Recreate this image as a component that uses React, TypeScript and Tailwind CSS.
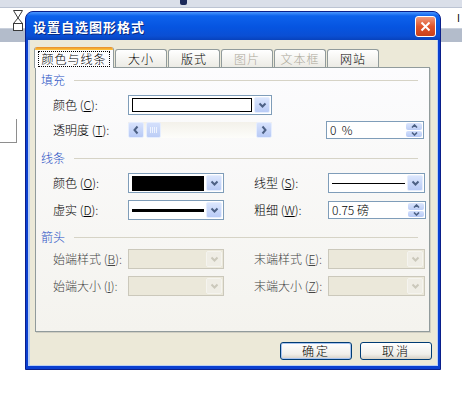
import React from 'react';

const font = "font-['Noto_Sans_CJK_SC','Noto_Sans',sans-serif]";

function Chevron({ disabled }: { disabled?: boolean }) {
  return (
    <svg width="9" height="7" viewBox="0 0 9 7">
      <path d="M1.5 1.5 L4.5 4.5 L7.5 1.5" fill="none" stroke={disabled ? '#cbc8bb' : '#4d6185'} strokeWidth="2" />
    </svg>
  );
}

function DropBtn({ disabled }: { disabled?: boolean }) {
  return (
    <div
      className={`w-[16px] shrink-0 flex items-center justify-center rounded-[2px] border ${
        disabled
          ? 'border-[#f5f4ef] bg-[#efede5]'
          : 'border-[#e6eefe] bg-[linear-gradient(to_bottom,#dbe6fd,#b9cbf6)]'
      }`}
    >
      <Chevron disabled={disabled} />
    </div>
  );
}

function Combo({ w, disabled, children }: { w: string; disabled?: boolean; children?: React.ReactNode }) {
  return (
    <div
      className={`${w} h-[20px] shrink-0 flex p-[1px] border ${
        disabled ? 'border-[#cbc8bb] bg-[#ebe8da]' : 'border-[#7f9db9] bg-white'
      }`}
    >
      <div className="flex-1 flex items-center px-[2px] min-w-0">{children}</div>
      <DropBtn disabled={disabled} />
    </div>
  );
}

function Arrow({ dir }: { dir: 'left' | 'right' }) {
  return (
    <svg width="8" height="10" viewBox="0 0 8 10">
      <path
        d={dir === 'left' ? 'M5.5 1.5 L2.5 5 L5.5 8.5' : 'M2.5 1.5 L5.5 5 L2.5 8.5'}
        fill="none"
        stroke="#4d6185"
        strokeWidth="2"
      />
    </svg>
  );
}

function ScrollBtn({ dir }: { dir: 'left' | 'right' }) {
  return (
    <div className="w-[16px] h-[16px] shrink-0 flex items-center justify-center rounded-[2px] border border-[#e6eefe] bg-[linear-gradient(to_bottom,#d7e2fc,#b8caf5)]">
      <Arrow dir={dir} />
    </div>
  );
}

function Spin({ children }: { children: React.ReactNode }) {
  return (
    <div className="w-[98px] h-[18px] shrink-0 flex p-[1px] border border-[#7f9db9] bg-white">
      <div className="flex-1 flex items-center pl-[2px] text-[12px] font-light text-black whitespace-pre">{children}</div>
      <div className="w-[16px] flex flex-col gap-[1px]">
        <div className="flex-1 flex items-center justify-center rounded-[2px] bg-[linear-gradient(to_bottom,#dbe6fd,#bccdf6)]">
          <svg width="7" height="4" viewBox="0 0 7 4">
            <path d="M1 3.5 L3.5 1 L6 3.5" fill="none" stroke="#4d6185" strokeWidth="1.6" />
          </svg>
        </div>
        <div className="flex-1 flex items-center justify-center rounded-[2px] bg-[linear-gradient(to_bottom,#d3e0fc,#b6c9f5)]">
          <svg width="7" height="4" viewBox="0 0 7 4">
            <path d="M1 0.5 L3.5 3 L6 0.5" fill="none" stroke="#4d6185" strokeWidth="1.6" />
          </svg>
        </div>
      </div>
    </div>
  );
}

function Section({ title }: { title: string }) {
  return (
    <div className="h-[14px] flex items-center pr-[6px]">
      <span className="text-[12px] font-light leading-none text-[#1f4fc4]">{title}</span>
      <div className="flex-1 ml-[9px] h-px bg-[#d6d3c6]" />
    </div>
  );
}

function Label({ w, children }: { w: string; children: React.ReactNode }) {
  return <span className={`${w} shrink-0 text-[12px] font-light leading-none text-black`}>{children}</span>;
}

const tabs = [
  { name: '大小', disabled: false },
  { name: '版式', disabled: false },
  { name: '图片', disabled: true },
  { name: '文本框', disabled: true },
  { name: '网站', disabled: false },
];

export default function App() {
  return (
    <div className={`relative w-[462px] h-[394px] bg-white overflow-hidden ${font}`}>
      {/* word window behind */}
      <div className="h-[8px] bg-[#dadfe9] border-b border-[#bcc4d3] relative">
        <div className="absolute left-[180px] top-0 w-[7px] h-[5px] bg-[#1c2a5a] rounded-b-[2px]" />
      </div>
      <div className="h-[20px] relative">
        <span className="absolute right-[2px] top-[5px] text-[10px] leading-none text-black">I</span>
      </div>
      <div className="h-[14px] bg-[#b3bccb] border-t border-[#c9d0dc]" />
      <div className="mt-[77px] w-[17px] h-[24px] border-r border-b border-[#8e8e8e]" />

      <svg className="absolute left-[13px] top-[10px]" width="10" height="21" viewBox="0 0 10 21">
        <path d="M0.5 0.5 H9.5 L5 8 Z" fill="white" stroke="#3a3a3a" />
        <path d="M5 8 L9.5 13.5 H0.5 Z" fill="white" stroke="#3a3a3a" />
        <rect x="0.5" y="13.5" width="9" height="7" fill="white" stroke="#3a3a3a" />
      </svg>

      {/* dialog window */}
      <div className="absolute left-[25px] top-[11px] w-[416px] h-[359px] flex flex-col rounded-t-[8px] bg-[#0a3fd0] border border-[#0a1f8a]">
        <div className="h-[28px] shrink-0 flex items-center pl-[7px] pr-[4px] rounded-t-[7px] bg-[linear-gradient(to_bottom,#4a97ff_0%,#0d62ec_14%,#0654e0_55%,#0a4fd4_85%,#0842bc_100%)]">
          <span className="flex-1 text-[13px] font-bold tracking-[1px] text-white leading-none [text-shadow:1px_1px_0_#0a2a80]">
            设置自选图形格式
          </span>
          <div className="w-[21px] h-[21px] rounded-[3px] border border-white bg-[linear-gradient(to_bottom,#f09a7c,#e0552c_50%,#c8401c)] flex items-center justify-center">
            <svg width="11" height="11" viewBox="0 0 11 11">
              <path d="M1.5 1.5 L9.5 9.5 M9.5 1.5 L1.5 9.5" stroke="white" strokeWidth="2" />
            </svg>
          </div>
        </div>

        <div className="flex-1 mx-[2px] mb-[3px] flex flex-col bg-[#ece9d8] border-l-[2px] border-b border-r border-[#b9cff4] pl-[5px] pr-[6px] pt-[7px]">
          {/* tabs */}
          <div className="h-[20px] flex items-end relative z-10">
            <div className="-ml-[1px] w-[80px] h-[21px] -mb-[1px] flex flex-col rounded-t-[3px] border-x border-[#919b9c] bg-[#fcfcfe] overflow-hidden">
              <div className="h-[3px] bg-[linear-gradient(to_bottom,#e68b2c,#ffc73c)]" />
              <div className="flex-1 flex items-center justify-center">
                <span className="text-[12px] font-light leading-none text-black tracking-[1px] px-[2px] py-[1px] border border-dotted border-black">
                  颜色与线条
                </span>
              </div>
            </div>
            {tabs.map((t) => (
              <div
                key={t.name}
                className={`ml-[1px] w-[52px] h-[18px] flex items-center justify-center rounded-t-[3px] border-x border-t border-[#919b9c] bg-[linear-gradient(to_bottom,#ffffff,#ecebe5)] text-[12px] font-light leading-none tracking-[1px] ${
                  t.disabled ? 'text-[#aca899]' : 'text-black'
                }`}
              >
                {t.name}
              </div>
            ))}
          </div>

          {/* panel */}
          <div className="w-[395px] h-[265px] flex flex-col px-[5px] border border-[#919b9c] bg-[linear-gradient(to_bottom,#fcfcfe,#f4f3ee)] shadow-[1px_1px_0_#d0cec2]">
            <div className="mt-[5px]">
              <Section title="填充" />
            </div>
            <div className="mt-[8px] h-[20px] flex items-center pl-[12px]">
              <Label w="w-[75px]">颜色 (<u>C</u>):</Label>
              <Combo w="w-[144px]">
                <div className="w-full h-[14px] border border-black bg-white" />
              </Combo>
            </div>
            <div className="mt-[7px] h-[16px] flex items-center pl-[12px]">
              <Label w="w-[75px]">透明度 (<u>T</u>):</Label>
              <div className="w-[144px] h-[16px] shrink-0 flex bg-[linear-gradient(to_bottom,#f3f1ea,#fdfdfa)]">
                <ScrollBtn dir="left" />
                <div className="ml-[2px] w-[15px] h-[16px] rounded-[2px] border border-[#e6eefe] bg-[linear-gradient(to_bottom,#d4e0fc,#bccdf6)] flex items-center justify-center gap-[1px]">
                  <div className="w-px h-[6px] bg-[#eef3fe]" />
                  <div className="w-px h-[6px] bg-[#eef3fe]" />
                  <div className="w-px h-[6px] bg-[#eef3fe]" />
                  <div className="w-px h-[6px] bg-[#eef3fe]" />
                </div>
                <div className="flex-1" />
                <ScrollBtn dir="right" />
              </div>
              <div className="ml-[54px]">
                <Spin>0  %</Spin>
              </div>
            </div>

            <div className="mt-[13px]">
              <Section title="线条" />
            </div>
            <div className="mt-[8px] h-[20px] flex items-center pl-[12px]">
              <Label w="w-[75px]">颜色 (<u>O</u>):</Label>
              <Combo w="w-[96px]">
                <div className="w-full h-[15px] bg-black" />
              </Combo>
              <div className="w-[30px] shrink-0" />
              <Label w="w-[74px]">线型 (<u>S</u>):</Label>
              <Combo w="w-[97px]">
                <div className="w-full h-px bg-black" />
              </Combo>
            </div>
            <div className="mt-[7px] h-[20px] flex items-center pl-[12px]">
              <Label w="w-[75px]">虚实 (<u>D</u>):</Label>
              <Combo w="w-[96px]">
                <div className="w-full h-[3px] bg-black" />
              </Combo>
              <div className="w-[30px] shrink-0" />
              <Label w="w-[74px]">粗细 (<u>W</u>):</Label>
              <Spin>0.75 磅</Spin>
            </div>

            <div className="mt-[10px]">
              <Section title="箭头" />
            </div>
            <div className="mt-[5px] h-[20px] flex items-center pl-[12px]">
              <Label w="w-[75px]">
                <span className="text-[#444]">始端样式 (<u>B</u>):</span>
              </Label>
              <Combo w="w-[96px]" disabled />
              <div className="w-[30px] shrink-0" />
              <Label w="w-[74px]">
                <span className="text-[#444]">末端样式 (<u>E</u>):</span>
              </Label>
              <Combo w="w-[97px]" disabled />
            </div>
            <div className="mt-[7px] h-[20px] flex items-center pl-[12px]">
              <Label w="w-[75px]">
                <span className="text-[#444]">始端大小 (<u>I</u>):</span>
              </Label>
              <Combo w="w-[96px]" disabled />
              <div className="w-[30px] shrink-0" />
              <Label w="w-[74px]">
                <span className="text-[#444]">末端大小 (<u>Z</u>):</span>
              </Label>
              <Combo w="w-[97px]" disabled />
            </div>
          </div>

          {/* buttons */}
          <div className="mt-[10px] flex justify-end gap-[8px] -mr-[1px]">
            <button className="w-[72px] h-[18px] rounded-[3px] border border-[#003c74] bg-[linear-gradient(to_bottom,#ffffff,#f0efea_70%,#d6d0c5)] shadow-[inset_0_0_0_1px_#a8c4f0] text-[12px] font-light leading-none text-black tracking-[2px]">
              确定
            </button>
            <button className="w-[72px] h-[18px] rounded-[3px] border border-[#003c74] bg-[linear-gradient(to_bottom,#ffffff,#f0efea_70%,#d6d0c5)] text-[12px] font-light leading-none text-black tracking-[2px]">
              取消
            </button>
          </div>
        </div>
      </div>
    </div>
  );
}
